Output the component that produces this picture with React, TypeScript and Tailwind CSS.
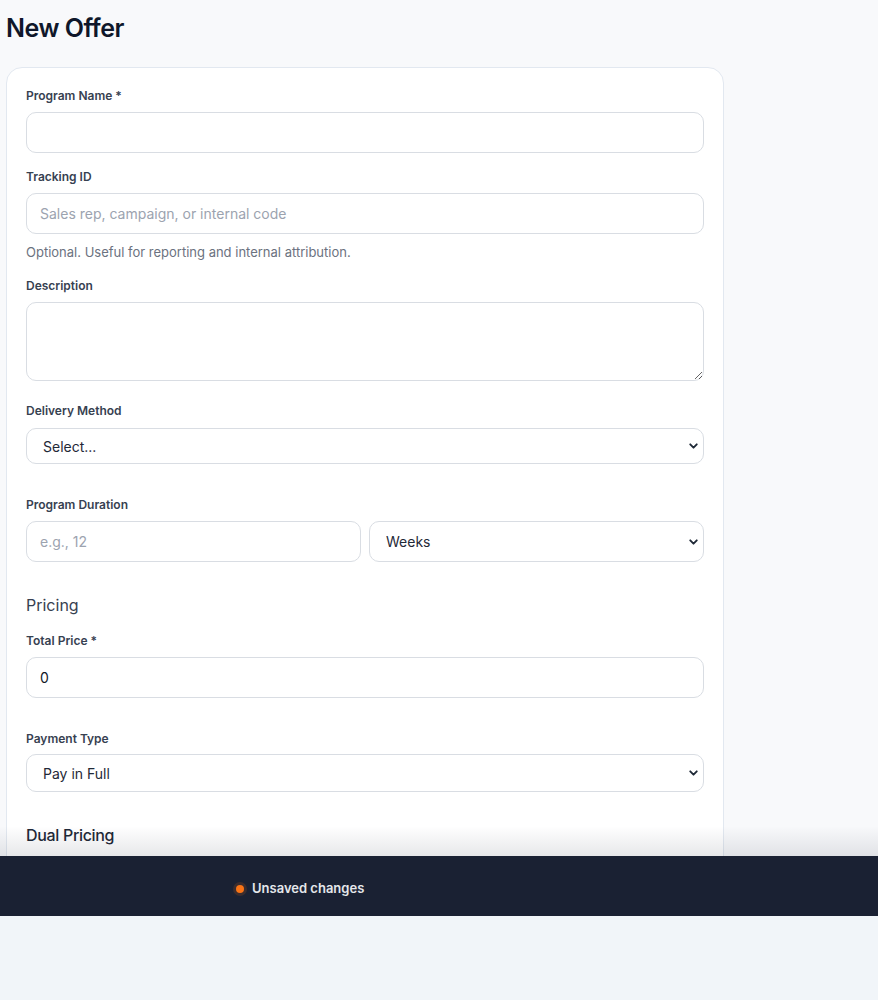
import { ChevronDown } from "lucide-react";

const labelCls = "block text-[12px] leading-4 font-semibold text-[#374151] mb-2";
const inputCls =
  "block w-full h-[41px] rounded-[10px] border border-[#d9dde3] bg-white px-[13px] text-[14px] text-[#111827] placeholder:text-[#9ca3af] outline-none";

const Select = ({ value, options, h }: { value: string; options: string[]; h: string }) => (
  <div className="relative">
    <select
      defaultValue={value}
      className={`block w-full ${h} appearance-none rounded-[10px] border border-[#d9dde3] bg-white pl-[16px] pr-8 text-[14px] text-[#1f2937] outline-none`}
    >
      {options.map((o) => (
        <option key={o}>{o}</option>
      ))}
    </select>
    <ChevronDown
      className="pointer-events-none absolute right-[4px] top-1/2 h-[13px] w-[13px] -translate-y-1/2 text-[#1f2937]"
      strokeWidth={3.5}
    />
  </div>
);

export default function App() {
  return (
    <div className="min-h-screen bg-[#f1f5f9] font-['Inter',sans-serif]">
      <div className="relative flex h-[916px] flex-col overflow-hidden bg-[#f8f9fb]">
        <div className="flex-1 overflow-hidden px-[6px] pt-[12px]">
          <h1 className="text-[25px] leading-8 font-semibold tracking-[-0.02em] text-[#0f172a]">New Offer</h1>
          <div className="mt-[23px] w-[718px] rounded-[16px] border border-[#e2e8f0] bg-white px-[19px] pt-[20px] pb-32">
            <label className={labelCls}>Program Name *</label>
            <input className={inputCls} />

            <label className={`${labelCls} mt-4`}>Tracking ID</label>
            <input className={inputCls} placeholder="Sales rep, campaign, or internal code" />
            <p className="mt-2 text-[13px] leading-5 text-[#6b7280]">
              Optional. Useful for reporting and internal attribution.
            </p>

            <label className={`${labelCls} mt-4`}>Description</label>
            <textarea
              rows={3}
              className="block h-[79px] w-full rounded-[10px] border border-[#d9dde3] bg-white px-[13px] py-2 text-[14px] outline-none"
            />

            <label className={`${labelCls} mt-[22px] !mb-[9px]`}>Delivery Method</label>
            <Select value="Select..." options={["Select...", "Online", "In Person", "Hybrid"]} h="h-[36px]" />

            <label className={`${labelCls} mt-[33px]`}>Program Duration</label>
            <div className="grid grid-cols-2 gap-2">
              <input className={inputCls} placeholder="e.g., 12" />
              <Select value="Weeks" options={["Days", "Weeks", "Months"]} h="h-[41px]" />
            </div>

            <h2 className="mt-[31px] text-[16px] leading-6 text-[#374151]">Pricing</h2>
            <label className={`${labelCls} mt-[16px]`}>Total Price *</label>
            <input className={inputCls} defaultValue="0" />

            <label className={`${labelCls} mt-[33px] !mb-[7px]`}>Payment Type</label>
            <Select value="Pay in Full" options={["Pay in Full", "Payment Plan"]} h="h-[38px]" />

            <h2 className="mt-[31px] text-[16px] leading-6 font-medium tracking-[-0.02em] text-[#1f2937]">
              Dual Pricing
            </h2>
          </div>
        </div>
        <div className="pointer-events-none absolute inset-x-0 bottom-[60px] h-[30px] bg-gradient-to-b from-transparent to-[#0f172a]/10" />
        <div className="flex h-[60px] shrink-0 items-center bg-[#1a2133] pl-[236px] pt-1.5">
          <span className="h-2 w-2 rounded-full bg-[#f97316] shadow-[0_0_0_3px_rgba(249,115,22,0.15)]" />
          <span className="ml-2 text-[13px] font-semibold text-[#e5e7eb]">Unsaved changes</span>
        </div>
      </div>
    </div>
  );
}
